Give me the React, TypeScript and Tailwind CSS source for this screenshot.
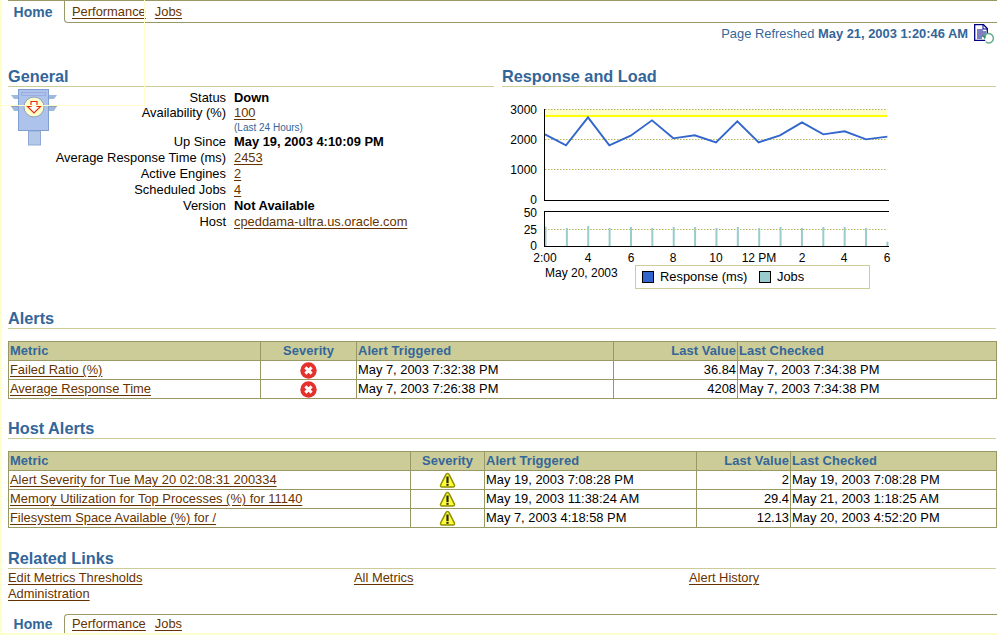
import type { ReactNode } from 'react';

const font = "font-['Liberation_Sans',Arial,sans-serif]";

function TextLink({ children }: { children: ReactNode }) {
  return <a href="#" className="text-[#663300] underline underline-offset-2">{children}</a>;
}

function TabBar({ bottom }: { bottom?: boolean }) {
  return (
    <div>
      {!bottom && <div className="ml-[6px] h-[1px] bg-[#999966]" />}
      <div className={bottom ? 'flex h-[19px]' : 'flex h-[22px]'}>
        <div className="flex w-[62px] items-center justify-center text-[14px] font-bold text-[#336699]">Home</div>
        <div
          className={
            bottom
              ? 'flex flex-1 items-center gap-[9px] rounded-tl-[4px] border-t border-l border-[#999966] pl-[7px]'
              : 'flex flex-1 items-center gap-[9px] rounded-bl-[4px] border-b border-l border-[#999966] pl-[7px]'
          }
        >
          <TextLink>Performance</TextLink>
          <TextLink>Jobs</TextLink>
        </div>
      </div>
    </div>
  );
}

function Heading({ children }: { children: ReactNode }) {
  return <h2 className="h-[21px] border-b border-[#cccc99] text-[16.3px] leading-[20px] font-bold text-[#336699]">{children}</h2>;
}

function RefreshIcon() {
  return (
    <svg width="20" height="20" viewBox="0 0 20 20" className="block">
      <path d="M0.700 0.700h8.800l3.800 3.800v11.800H0.700z" fill="#fff" stroke="#000080" strokeWidth="1.300" />
      <path d="M9 1v4h4" fill="none" stroke="#000080" />
      <path d="M3 6h6M3 8h9M3 10h9M3 12h7M3 14h5" stroke="#000080" />
      <path d="M10.200 12.800a4.700 4.700 0 1 1 1.400 5" fill="#fff" stroke="#66b08c" strokeWidth="1.500" />
      <path d="M8.300 11.400h4l-1.400 4z" fill="#2f9a6a" />
    </svg>
  );
}

function TrafficIcon() {
  return (
    <svg width="48" height="57" viewBox="0 0 48 57" className="block">
      <path d="M1 6h8v4H4zM39 6h8l-3 4h-5z" fill="#9fb8de" />
      <path d="M1 17h8v5H4zM39 17h8l-3 5h-5z" fill="#9fb8de" />
      <path d="M1 17h8M39 17h8" stroke="#8a8a8a" />
      <rect x="18.500" y="42" width="12" height="14" fill="#b4c9ea" stroke="#8fa9d4" />
      <rect x="8.500" y="0.500" width="30" height="41" fill="#adc3eb" stroke="#7f9fd0" />
      <rect x="11.500" y="3.500" width="24" height="3" fill="none" stroke="#8a94d8" strokeDasharray="1 1" />
      <circle cx="24" cy="18" r="10" fill="#ffffcc" stroke="#8fa0b8" />
      <path d="M21 12.500h6v5h3.500L24 24l-6.500-6.500H21z" fill="#fff" stroke="#e63010" strokeWidth="1.200" />
    </svg>
  );
}

function ErrorIcon() {
  return (
    <svg width="17" height="17" viewBox="0 0 17 17" className="mx-auto block">
      <circle cx="8.500" cy="8.500" r="8.200" fill="#e5302c" />
      <path d="M5.400 5.400l6.200 6.200M11.600 5.400l-6.200 6.200" stroke="#fff" strokeWidth="3" />
    </svg>
  );
}

function WarningIcon() {
  return (
    <svg width="17" height="17" viewBox="0 0 17 17" className="mx-auto block">
      <path d="M8.500 1.500c1 0 1.500 0.800 2 1.800l4.800 9.500c0.600 1.400 0 2.200-1.300 2.200H3c-1.300 0-1.900-0.800-1.300-2.200l4.800-9.500c0.500-1 1-1.800 2-1.800z" fill="#ffff33" stroke="#8f8f00" strokeWidth="1.500" />
      <path d="M8.500 4.500v6.500" stroke="#222" strokeWidth="2.200" />
      <path d="M8.500 11.800v2" stroke="#222" strokeWidth="2.200" />
    </svg>
  );
}

const responsePoints = [
  [135, 118], [198, 151], [264, 67], [328, 151], [392, 122], [456, 76], [520, 130], [584, 121], [648, 142],
  [712, 79], [776, 142], [840, 121], [906, 82], [970, 118], [1034, 109], [1098, 133], [1162, 125],
];
const jobBars = [395, 399, 393, 399, 396, 399, 396, 396, 399, 396, 399, 396, 399, 396, 396, 399, 440];
const xLabels: [string, number][] = [
  ['2:00', 545], ['4', 588], ['6', 631], ['8', 673], ['10', 716], ['12 PM', 759], ['2', 802], ['4', 844], ['6', 887],
];
const yLabels: [string, number][] = [
  ['3000', 114], ['2000', 144], ['1000', 174], ['0', 204], ['50', 217], ['25', 234], ['0', 250],
];

function Chart() {
  const points = responsePoints.map(([x, y]) => `${500 + x / 3},${95 + y / 3}`).join(' ');
  return (
    <svg width="400" height="200" viewBox="500 95 400 200" className="block">
      <rect x="545" y="109.500" width="342" height="6" fill="#ffffcc" />
      {[109.500, 139.500, 169.500, 229.500].map((y) => (
        <line key={y} x1="545" x2="887" y1={y} y2={y} stroke="#b5b55a" strokeDasharray="1.500 1.500" />
      ))}
      <rect x="545" y="115" width="342" height="2" fill="#ffff00" />
      <polyline points={points} fill="none" stroke="#3366cc" strokeWidth="1.900" />
      {jobBars.map((y, i) => (
        <rect key={i} x={544.500 + i * 21.370} y={95 + y / 3} width="2" height={246 - (95 + y / 3)} fill="#99cccc" />
      ))}
      <path d="M544.500 109v92M544.500 211v36M544 200.500h345M544 211.500h345M544 246.500h345" stroke="#000" fill="none" />
      <g fontSize="12" fill="#000" fontFamily="Liberation Sans, Arial, sans-serif">
        {yLabels.map(([t, y], i) => (
          <text key={i} x="537" y={y} textAnchor="end">{t}</text>
        ))}
        {xLabels.map(([t, x], i) => (
          <text key={i} x={x} y="262" textAnchor="middle">{t}</text>
        ))}
        <text x="545" y="277">May 20, 2003</text>
        <rect x="635.500" y="265.500" width="234" height="23" fill="#fff" stroke="#cccc99" />
        <rect x="642.500" y="271.500" width="11" height="11" fill="#3366cc" stroke="#000" />
        <text x="660" y="281" fontSize="12.900">Response (ms)</text>
        <rect x="759.500" y="271.500" width="11" height="11" fill="#99cccc" stroke="#000" />
        <text x="777" y="281" fontSize="12.900">Jobs</text>
      </g>
    </svg>
  );
}

type GeneralRow = { label: string; value: ReactNode; h?: string };

const generalRows: GeneralRow[] = [
  { label: 'Status', value: <b>Down</b>, h: 'h-[15px]' },
  { label: 'Availability (%)', value: <TextLink>100</TextLink> },
  { label: '', value: <span className="mt-[1px] block text-[10px] leading-[12px] text-[#336699]">(Last 24 Hours)</span>, h: 'h-[13px]' },
  { label: 'Up Since', value: <b>May 19, 2003 4:10:09 PM</b> },
  { label: 'Average Response Time (ms)', value: <TextLink>2453</TextLink> },
  { label: 'Active Engines', value: <TextLink>2</TextLink> },
  { label: 'Scheduled Jobs', value: <TextLink>4</TextLink> },
  { label: 'Version', value: <b>Not Available</b> },
  { label: 'Host', value: <TextLink>cpeddama-ultra.us.oracle.com</TextLink> },
];

type AlertRow = { metric: string; triggered: string; value: string; checked: string };

function AlertTable({ rows, widths, icon }: { rows: AlertRow[]; widths: number[]; icon: ReactNode }) {
  const th = 'border border-[#999966] px-[1px] h-[19px] text-[#336699] font-bold tracking-[0.1px]';
  const td = 'border border-[#999966] px-[1px] h-[19px]';
  return (
    <table className="w-[988px] table-fixed border-collapse leading-[14px]">
      <colgroup>
        {widths.map((w, i) => (
          <col key={i} style={{ width: w }} />
        ))}
      </colgroup>
      <thead className="bg-[#cccc99]">
        <tr>
          <th className={`${th} text-left`}>Metric</th>
          <th className={`${th} text-center`}>Severity</th>
          <th className={`${th} text-left`}>Alert Triggered</th>
          <th className={`${th} text-right`}>Last Value</th>
          <th className={`${th} text-left`}>Last Checked</th>
        </tr>
      </thead>
      <tbody>
        {rows.map((r) => (
          <tr key={r.metric}>
            <td className={td}><TextLink>{r.metric}</TextLink></td>
            <td className={td}>{icon}</td>
            <td className={td}>{r.triggered}</td>
            <td className={`${td} text-right`}>{r.value}</td>
            <td className={td}>{r.checked}</td>
          </tr>
        ))}
      </tbody>
    </table>
  );
}

const alerts: AlertRow[] = [
  { metric: 'Failed Ratio (%)', triggered: 'May 7, 2003 7:32:38 PM', value: '36.84', checked: 'May 7, 2003 7:34:38 PM' },
  { metric: 'Average Response Time', triggered: 'May 7, 2003 7:26:38 PM', value: '4208', checked: 'May 7, 2003 7:34:38 PM' },
];

const hostAlerts: AlertRow[] = [
  { metric: 'Alert Severity for Tue May 20 02:08:31 200334', triggered: 'May 19, 2003 7:08:28 PM', value: '2', checked: 'May 19, 2003 7:08:28 PM' },
  { metric: 'Memory Utilization for Top Processes (%) for 11140', triggered: 'May 19, 2003 11:38:24 AM', value: '29.4', checked: 'May 21, 2003 1:18:25 AM' },
  { metric: 'Filesystem Space Available (%) for /', triggered: 'May 7, 2003 4:18:58 PM', value: '12.13', checked: 'May 20, 2003 4:52:20 PM' },
];

export default function App() {
  return (
    <div className={`${font} relative flex h-[635px] w-[997px] flex-col overflow-hidden border-b-2 border-l-2 border-[#ffffcc] bg-white text-[12.9px] leading-[16px] text-black`}>
      <TabBar />

      <div className="mr-[3px] flex h-[21px] items-center justify-end gap-[6px] pt-[1px] text-[#336699]">
        <span>Page Refreshed <b>May 21, 2003 1:20:46 AM</b></span>
        <RefreshIcon />
      </div>

      <div className="ml-[6px] mt-[22px] flex h-[219px]">
        <section className="w-[494px]">
          <div className="mr-[8px]"><Heading>General</Heading></div>
          <div className="flex pt-[3px]">
            <div className="-mt-[1px] w-[48px] pl-[2px]"><TrafficIcon /></div>
            <div className="grid grid-cols-[168px_1fr] gap-x-[8px] pl-[2px]">
              {generalRows.map((r, i) => (
                <div key={i} className="contents">
                  <div className={`${r.h ?? 'h-[16px]'} flex justify-end whitespace-nowrap`}>{r.label}</div>
                  <div className={`${r.h ?? 'h-[16px]'} whitespace-nowrap`}>{r.value}</div>
                </div>
              ))}
            </div>
          </div>
        </section>
        <section className="flex-1">
          <div className="mr-[1px]"><Heading>Response and Load</Heading></div>
          <div className="-ml-[2px] pt-[8px]"><Chart /></div>
        </section>
      </div>

      <div className="ml-[6px] mr-[1px]">
        <div className="mt-[23px]"><Heading>Alerts</Heading></div>
        <div className="mt-[12px]">
          <AlertTable rows={alerts} widths={[252, 96, 257, 124, 259]} icon={<ErrorIcon />} />
        </div>
        <div className="mt-[19px]"><Heading>Host Alerts</Heading></div>
        <div className="mt-[12px]">
          <AlertTable rows={hostAlerts} widths={[402, 74, 212, 94, 206]} icon={<WarningIcon />} />
        </div>
        <div className="mt-[20px]"><Heading>Related Links</Heading></div>
        <div className="grid grid-cols-[346px_335px_1fr] pt-[1px]">
          <TextLink>Edit Metrics Thresholds</TextLink>
          <TextLink>All Metrics</TextLink>
          <TextLink>Alert History</TextLink>
          <TextLink>Administration</TextLink>
        </div>
      </div>

      <div className="mt-auto"><TabBar bottom /></div>

      <div className="pointer-events-none absolute top-0 left-0 h-[106px] w-[143px] border-r border-b border-[#ffffcc]" />
    </div>
  );
}
